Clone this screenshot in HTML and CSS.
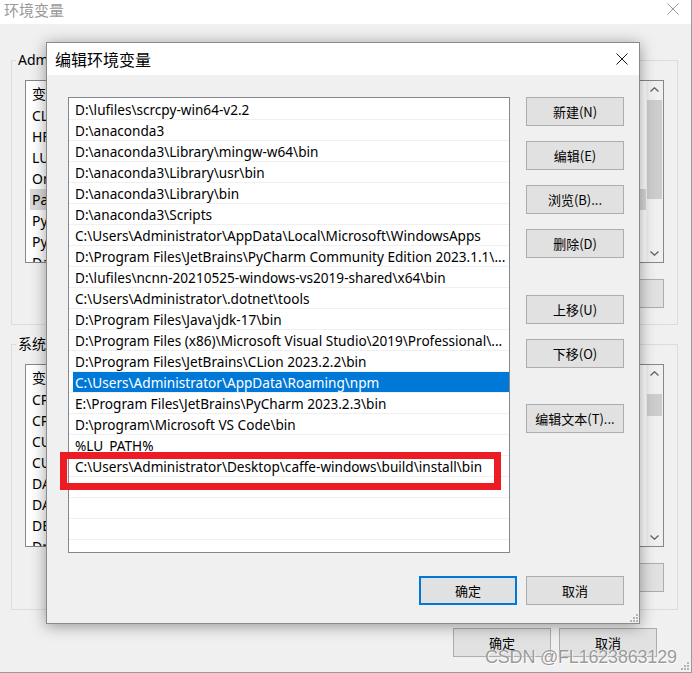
FILE: index.html
```html
<!DOCTYPE html>
<html lang="zh-CN">
<head>
<meta charset="utf-8">
<title>环境变量</title>
<link rel="stylesheet" href="styles.css">
</head>
<body>
<div class="win">
  <div class="win-title">
    <span class="win-title-text">环境变量</span>
    <svg class="x-icon bg-x" width="12" height="12" viewBox="0 0 12 12"><path d="M0.5 0.5L11.5 11.5M11.5 0.5L0.5 11.5" stroke="#9a9a9a" stroke-width="1" fill="none"/></svg>
  </div>
  <div class="win-body">
    <fieldset class="group">
      <legend>Administrator 的用户变量(U)</legend>
      <div class="lv">
        <div class="lv-main">
          <div class="lv-head"><span class="c1">变量</span></div>
          <div class="lv-row"><span class="c1">CLION_HOME</span></div>
          <div class="lv-row"><span class="c1">HF_HOME</span></div>
          <div class="lv-row"><span class="c1">LU_PATH</span></div>
          <div class="lv-row"><span class="c1">OneDrive</span></div>
          <div class="lv-row sel"><span class="c1">Path</span></div>
          <div class="lv-row"><span class="c1">PyCharm</span></div>
          <div class="lv-row"><span class="c1">PyCharm CE</span></div>
          <div class="lv-row"><span class="c1">DataSpell</span></div>
        </div>
        <div class="sb">
          <div class="sb-btn"><svg width="9" height="5" viewBox="0 0 9 5"><path d="M0.5 4.5L4.5 0.8L8.5 4.5" fill="none" stroke="#606060" stroke-width="1.3"/></svg></div>
          <div class="sb-track"><div class="sb-thumb thumb-a"></div></div>
          <div class="sb-btn"><svg width="9" height="5" viewBox="0 0 9 5"><path d="M0.5 0.5L4.5 4.2L8.5 0.5" fill="none" stroke="#606060" stroke-width="1.3"/></svg></div>
        </div>
      </div>
      <div class="btn-row">
        <button class="btn">新建(N)...</button>
        <button class="btn">编辑(E)...</button>
        <button class="btn">删除(D)</button>
      </div>
    </fieldset>
    <fieldset class="group group-sys">
      <legend>系统变量(S)</legend>
      <div class="lv">
        <div class="lv-main">
          <div class="lv-head"><span class="c1">变量</span></div>
          <div class="lv-row"><span class="c1">CPATH</span></div>
          <div class="lv-row"><span class="c1">CPU_NUM</span></div>
          <div class="lv-row"><span class="c1">CUDA_PATH</span></div>
          <div class="lv-row"><span class="c1">CUDA_PATH_V11</span></div>
          <div class="lv-row"><span class="c1">DATA_HOME</span></div>
          <div class="lv-row"><span class="c1">DATA_DIR</span></div>
          <div class="lv-row"><span class="c1">DEBUG</span></div>
          <div class="lv-row"><span class="c1">DriverData</span></div>
        </div>
        <div class="sb">
          <div class="sb-btn"><svg width="9" height="5" viewBox="0 0 9 5"><path d="M0.5 4.5L4.5 0.8L8.5 4.5" fill="none" stroke="#606060" stroke-width="1.3"/></svg></div>
          <div class="sb-track"><div class="sb-thumb thumb-b"></div></div>
          <div class="sb-btn"><svg width="9" height="5" viewBox="0 0 9 5"><path d="M0.5 0.5L4.5 4.2L8.5 0.5" fill="none" stroke="#606060" stroke-width="1.3"/></svg></div>
        </div>
      </div>
      <div class="btn-row">
        <button class="btn">新建(W)...</button>
        <button class="btn">编辑(I)...</button>
        <button class="btn">删除(L)</button>
      </div>
    </fieldset>
    <div class="win-foot">
      <button class="btn">确定</button>
      <button class="btn">取消</button>
    </div>
  </div>
  <svg class="grip bg-grip" width="10" height="10" viewBox="0 0 10 10"><g fill="#b4b4b4"><rect x="8" y="8" width="2" height="2"/><rect x="5" y="8" width="2" height="2"/><rect x="2" y="8" width="2" height="2"/><rect x="8" y="5" width="2" height="2"/><rect x="5" y="5" width="2" height="2"/><rect x="8" y="2" width="2" height="2"/></g></svg>
</div>

<div class="dlg">
  <div class="dlg-title">
    <span class="dlg-title-text">编辑环境变量</span>
    <svg class="x-icon" width="12" height="12" viewBox="0 0 12 12"><path d="M0.5 0.5L11.5 11.5M11.5 0.5L0.5 11.5" stroke="#1a1a1a" stroke-width="1" fill="none"/></svg>
  </div>
  <div class="dlg-body">
    <div class="plist">
      <div class="prow"><span>D:\lufiles\scrcpy-win64-v2.2</span></div>
      <div class="prow"><span>D:\anaconda3</span></div>
      <div class="prow"><span>D:\anaconda3\Library\mingw-w64\bin</span></div>
      <div class="prow"><span>D:\anaconda3\Library\usr\bin</span></div>
      <div class="prow"><span>D:\anaconda3\Library\bin</span></div>
      <div class="prow"><span>D:\anaconda3\Scripts</span></div>
      <div class="prow"><span>C:\Users\Administrator\AppData\Local\Microsoft\WindowsApps</span></div>
      <div class="prow"><span>D:\Program Files\JetBrains\PyCharm Community Edition 2023.1.1\...</span></div>
      <div class="prow"><span>D:\lufiles\ncnn-20210525-windows-vs2019-shared\x64\bin</span></div>
      <div class="prow"><span>C:\Users\Administrator\.dotnet\tools</span></div>
      <div class="prow"><span>D:\Program Files\Java\jdk-17\bin</span></div>
      <div class="prow"><span>D:\Program Files (x86)\Microsoft Visual Studio\2019\Professional\...</span></div>
      <div class="prow"><span>D:\Program Files\JetBrains\CLion 2023.2.2\bin</span></div>
      <div class="prow sel"><span>C:\Users\Administrator\AppData\Roaming\npm</span></div>
      <div class="prow"><span>E:\Program Files\JetBrains\PyCharm 2023.2.3\bin</span></div>
      <div class="prow"><span>D:\program\Microsoft VS Code\bin</span></div>
      <div class="prow"><span>%LU_PATH%</span></div>
      <div class="prow"><span>C:\Users\Administrator\Desktop\caffe-windows\build\install\bin</span></div>
      <div class="prow"><span></span></div>
      <div class="prow"><span></span></div>
      <div class="prow"><span></span></div>
      <div class="prow"><span></span></div>
    </div>
    <div class="side">
      <button class="btn">新建(N)</button>
      <button class="btn">编辑(E)</button>
      <button class="btn">浏览(B)...</button>
      <button class="btn">删除(D)</button>
      <button class="btn move-up">上移(U)</button>
      <button class="btn">下移(O)</button>
      <button class="btn edit-text">编辑文本(T)...</button>
    </div>
    <div class="dlg-foot">
      <button class="btn btn-default">确定</button>
      <button class="btn">取消</button>
    </div>
  </div>
  <div class="mark"></div>
  <svg class="grip dlg-grip" width="10" height="10" viewBox="0 0 10 10"><g fill="#b4b4b4"><rect x="8" y="8" width="2" height="2"/><rect x="5" y="8" width="2" height="2"/><rect x="2" y="8" width="2" height="2"/><rect x="8" y="5" width="2" height="2"/><rect x="5" y="5" width="2" height="2"/><rect x="8" y="2" width="2" height="2"/></g></svg>
</div>

<div class="watermark">CSDN @FL1623863129</div>
</body>
</html>
```
FILE: styles.css
```css
* { box-sizing: border-box; }
html, body { margin: 0; padding: 0; }
body {
  width: 692px;
  height: 673px;
  overflow: hidden;
  position: relative;
  background: #f0f0f0;
  font-family: "Noto Sans", "Noto Sans CJK SC", sans-serif;
  font-size: 14px;
  color: #000;
}

/* ---------- background window ---------- */
.win {
  position: relative;
  width: 692px;
  height: 673px;
  border-right: 1px solid #9a9a9a;
  border-bottom: 1px solid #9a9a9a;
  background: #f0f0f0;
  display: flex;
  flex-direction: column;
}
.win-title {
  flex: none;
  height: 24px;
  background: #fff;
  display: flex;
  align-items: flex-start;
  justify-content: space-between;
  padding: 0 12px 0 4px;
}
.win-title-text {
  font-family: "Noto Sans CJK SC", sans-serif;
  font-size: 15px;
  line-height: 19px;
  color: #9a9a9a;
}
.bg-x { margin-top: 3px; }

.win-body {
  flex: 1;
  display: flex;
  flex-direction: column;
}
.group {
  margin: 26px 13px 0 11px;
  padding: 10px 13px 16px 13px;
  border: 1px solid #dcdcdc;
  min-width: 0;
}
.group-sys { margin-top: 9px; padding-bottom: 17px; }
.group legend {
  margin-left: -9px;
  padding: 0 2px;
  font-size: 14px;
  line-height: 20px;
  font-family: "Noto Sans", "Noto Sans CJK SC", sans-serif;
}
.lv {
  height: 183px;
  border: 1px solid #828790;
  background: #fff;
  display: flex;
}
.lv-main { flex: 1; overflow: hidden; }
.lv-head {
  height: 24px;
  display: flex;
  align-items: center;
  padding-left: 6px;
  font-family: "Noto Sans CJK SC", sans-serif;
}
.lv-row {
  height: 21px;
  margin-left: 4px;
  padding-left: 2px;
  display: flex;
  align-items: center;
  white-space: nowrap;
}
.lv-head .c1 { width: 150px; }
.lv-row .c1 { width: 148px; }
.lv-row.sel { background: #d9d9d9; }

.sb {
  width: 17px;
  background: #f0f0f0;
  display: flex;
  flex-direction: column;
}
.sb-btn {
  height: 17px;
  display: flex;
  align-items: center;
  justify-content: center;
}
.sb-track { flex: 1; }
.sb-thumb { margin: 2px 1px 0; background: #cdcdcd; }
.thumb-a { height: 99px; }
.thumb-b { margin-top: 12px; height: 22px; }

.btn-row {
  margin-top: 16px;
  display: flex;
  justify-content: flex-end;
  gap: 10px;
}
.btn {
  width: 98px;
  height: 29px;
  padding: 0;
  background: #e1e1e1;
  border: 1px solid #adadad;
  border-radius: 0;
  font-family: "Noto Sans CJK SC", sans-serif;
  font-size: 13px;
  color: #000;
}
.win-foot {
  margin-top: 18px;
  padding-right: 34px;
  display: flex;
  justify-content: flex-end;
  gap: 8px;
}
.grip { position: absolute; }
.bg-grip { right: 2px; bottom: 2px; }

/* ---------- edit dialog ---------- */
.dlg {
  position: absolute;
  left: 46px;
  top: 42px;
  width: 594px;
  height: 582px;
  border: 1px solid #8a8a8a;
  background: #f0f0f0;
  box-shadow: 0 2px 14px rgba(0, 0, 0, 0.38);
  display: flex;
  flex-direction: column;
}
.dlg-title {
  flex: none;
  height: 32px;
  background: #fff;
  display: flex;
  align-items: center;
  justify-content: space-between;
  padding: 0 11px 0 8px;
}
.dlg-title-text {
  font-family: "Noto Sans CJK SC", sans-serif;
  font-size: 16px;
  line-height: 20px;
}
.dlg-body {
  flex: 1;
  padding: 22px 15px 18px 21px;
  display: grid;
  grid-template-columns: 442px 98px;
  grid-template-rows: 456px 29px;
  column-gap: 16px;
  row-gap: 23px;
}
.plist {
  border: 1px solid #828790;
  background: #fff;
  padding-top: 1px;
  overflow: hidden;
}
.prow {
  height: 21px;
  border-bottom: 1px solid #f0f0f0;
  padding-left: 4px;
}
.prow span {
  display: block;
  height: 20px;
  line-height: 21px;
  padding-left: 2px;
  font-size: 13.6px;
  white-space: nowrap;
  overflow: hidden;
}
.prow.sel span { background: #0078d7; color: #fff; }

.side {
  display: flex;
  flex-direction: column;
  gap: 15px;
}
.move-up { margin-top: 22px; }
.edit-text { margin-top: 21px; }

.dlg-foot {
  grid-column: 1 / -1;
  display: flex;
  justify-content: flex-end;
  gap: 9px;
}
.btn-default {
  border-color: #0078d7;
  box-shadow: inset 0 0 0 1px #0078d7;
}
.mark {
  position: absolute;
  left: 13px;
  top: 409px;
  width: 441px;
  height: 38px;
  border: 7px solid #ed1c24;
}
.dlg-grip { right: 1px; bottom: 1px; }

/* ---------- watermark ---------- */
.watermark {
  position: absolute;
  left: 485px;
  top: 646px;
  font-family: "Liberation Sans", sans-serif;
  font-size: 18px;
  line-height: 22px;
  letter-spacing: -0.2px;
  color: rgba(120, 120, 120, 0.75);
  text-shadow: 0 0 1px #fff, 1px 1px 0 rgba(255, 255, 255, 0.8);
}
```
